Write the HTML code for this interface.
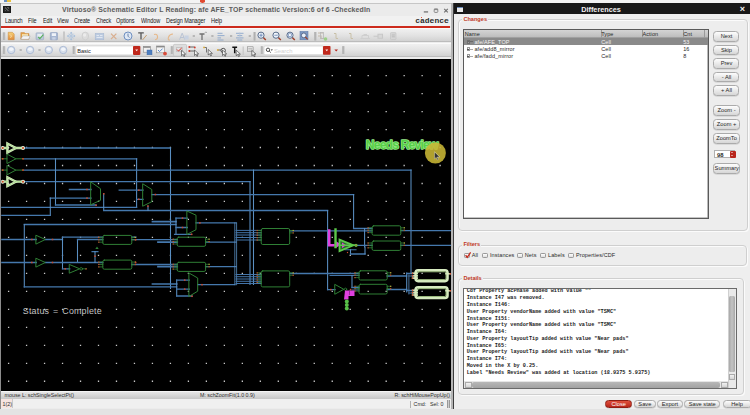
<!DOCTYPE html>
<html><head><meta charset="utf-8">
<style>
*{box-sizing:border-box;margin:0;padding:0}
html,body{width:750px;height:415px;overflow:hidden;background:#e2e2e2;font-family:"Liberation Sans",sans-serif}
.a{position:absolute;white-space:nowrap}
#topstrip{left:0;top:0;width:750px;height:3px;background:#f3f3f3}
#lw{left:0;top:3px;width:452px;height:405.5px;background:#ececec;overflow:hidden}
#lborder{left:0;top:3px;width:1.2px;height:405.5px;background:#8c8c8c}
#title{left:0;top:0;width:452px;height:12.5px;background:#ebebeb;border-top:1px solid #c6c6c6}
#titletext{left:62px;top:1.6px;font-size:6.95px;font-weight:bold;color:#5c5c5c;letter-spacing:0.13px}
#menubar{left:0;top:12.5px;width:452px;height:10.3px;background:#f1f1f1}
.menu{top:1.3px;font-size:6.9px;color:#151515;letter-spacing:-0.1px;transform:scaleX(0.8);transform-origin:0 0}
#redline{left:0;top:22.8px;width:449.5px;height:1.8px;background:#cd2b1d}
.tb{left:0;width:451.5px;background:linear-gradient(#f0f0f0,#e2e2e2 55%,#d2d2d2);border-top:1px solid #fafafa;border-bottom:0.8px solid #bcbcbc}
#canvas{left:1.2px;top:55.6px;width:450.4px;height:332px;background:#000;overflow:hidden}
#sb1{left:1.2px;top:387.5px;width:449.8px;height:8.5px;background:linear-gradient(#e6e6e6,#c6c6c6);font-size:5.3px;color:#2d2d2d;border-top:0.5px solid #f4f4f4}
#sb2{left:1.2px;top:395.6px;width:450px;height:9.4px;background:#f0f0f0;font-size:5.3px;color:#2d2d2d}
#gap1{left:451.4px;top:3px;width:1.4px;height:405.5px;background:#b5b5b5}
#gap2{left:452.8px;top:3px;width:1.4px;height:405.5px;background:#3c3c3c}
#dlg{left:454.2px;top:3px;width:295.8px;height:405.5px;background:#eeeeee;overflow:hidden}
#dtitle{left:-2px;top:0;width:298px;height:11.3px;background:#181818}
.grp{border:1px solid #cfcfcf;border-radius:4px;background:#ededed;box-shadow:inset 1px 1px 0 #fbfbfb,1px 1px 0 #fbfbfb}
.glabel{font-size:5.6px;font-weight:bold;color:#c0391f;background:#eeeeee;padding:0 1px}
.btn{border:1px solid #ababab;border-radius:3.5px;background:linear-gradient(#fdfdfd,#e6e6e6 60%,#d6d6d6);font-size:5.7px;color:#262626;text-align:center;line-height:9.5px;box-shadow:0 0.5px 0 #c8c8c8}
.cb{width:5.6px;height:5.6px;border:0.7px solid #9a9a9a;border-radius:1.2px;background:linear-gradient(#ffffff,#dedede)}
.ft{font-size:5.5px;color:#2a2a2a;letter-spacing:0.1px}
.row{left:0;width:245px;height:7.2px;font-size:5px;color:#222;line-height:7.2px}
#bottomstrip{left:0;top:408.5px;width:750px;height:6.5px;background:#e3e3e3}
#details{left:9px;top:285.3px;width:273.5px;height:100.5px;background:#fff;border:1px solid #6a6a6a;overflow:hidden}
#dtext{left:2.5px;top:-0.9px;font-family:"Liberation Mono",monospace;font-weight:bold;font-size:5.2px;line-height:6.78px;color:#1c1c1c;white-space:pre}
</style></head><body>
<div id="topstrip" class="a">
  <div class="a" style="left:200px;top:-1px;width:4.5px;height:3.5px;border-radius:50%;background:#e04a30"></div>
  <div class="a" style="left:4px;top:0;width:3px;height:2px;background:#6b8fc0"></div>
  <div class="a" style="left:7px;top:0;width:4px;height:2px;background:#e8c040"></div>
</div>
<div id="lw" class="a">
  <div id="title" class="a">
    <div class="a" style="left:3.4px;top:1.8px;width:7.4px;height:7px;background:#2c2c2c;box-shadow:inset 0 0 0 1.2px #1a1a1a"></div>
    <div class="a" style="left:5.1px;top:3.3px;width:4px;height:4px;background:repeating-linear-gradient(45deg,#555 0 1px,#222 1px 2px)"></div>
    <div id="titletext" class="a">Virtuoso® Schematic Editor L Reading: afe AFE_TOP schematic Version:6 of 6 -CheckedIn</div>
    <svg class="a" style="left:0;top:-3px" width="452" height="16" viewBox="0 0 452 16"><path d="M423.8 10.9h4.3" stroke="#8a8a8a" stroke-width="1.6"/><rect x="434.2" y="8" width="3.6" height="3.4" rx="0.8" fill="none" stroke="#8a8a8a" stroke-width="1"/><path d="M434 8.4h4" stroke="#8a8a8a" stroke-width="1.4"/><path d="M444.2 7.8l3.6 3.6M447.8 7.8l-3.6 3.6" stroke="#6e6e6e" stroke-width="1.1"/></svg>
  </div>
  <div id="menubar" class="a">
    <span class="a menu" style="left:5px">Launch</span>
    <span class="a menu" style="left:28px">File</span>
    <span class="a menu" style="left:42.5px">Edit</span>
    <span class="a menu" style="left:56.7px">View</span>
    <span class="a menu" style="left:74px">Create</span>
    <span class="a menu" style="left:96px">Check</span>
    <span class="a menu" style="left:116px">Options</span>
    <span class="a menu" style="left:140.7px">Window</span>
    <span class="a menu" style="left:166px">Design Manager</span>
    <span class="a menu" style="left:210.5px">Help</span>
    <span class="a" style="left:415.2px;top:0.6px;font-family:'Liberation Mono',monospace;font-size:8px;font-weight:bold;color:#2e2e2e;letter-spacing:0px">cadence</span>
    <div class="a" style="left:420.8px;top:1.1px;width:1.6px;height:1.3px;background:#e05a40"></div>
  </div>
  <div id="redline" class="a"></div>
  <div class="a tb" style="top:24.8px;height:14.6px"></div>
  <div class="a tb" style="top:39.6px;height:14.4px"></div><div class="a" style="left:0;top:54px;width:451.5px;height:1.6px;background:#ececec"></div>
    <div id="canvas" class="a"></div>
  <div id="sb1" class="a">
    <span class="a" style="left:3.4px;top:0.5px">mouse L: schSingleSelectPt()</span>
    <span class="a" style="left:198.8px;top:0.5px">M: schZoomFit(1.0 0.9)</span>
    <span class="a" style="left:393.2px;top:0.5px">R: schHiMousePopUp()</span>
  </div>
  <div id="sb2" class="a">
    <div class="a" style="left:0;top:0.5px;width:12.3px;height:9px;background:#f6e4e0;border-right:1px solid #c8c8c8"></div>
    <span class="a" style="left:1.3px;top:2px">1(2)</span>
    <div class="a" style="left:409px;top:2px;width:0.8px;height:7px;background:#b0b0b0"></div>
    <span class="a" style="left:412.4px;top:2px">Cmd:</span>
    <span class="a" style="left:428.8px;top:2px">Sel: 0</span>
    <div class="a" style="left:445.8px;top:1.9px;width:3.5px;height:7.3px;background:repeating-linear-gradient(90deg,#999 0 1px,#ccc 1px 1.7px)"></div>
  </div>
</div>
<svg class="a" style="left:0;top:0" width="452" height="391" viewBox="0 0 452 391"><defs><clipPath id="cc"><rect x="1.2" y="58.6" width="450.4" height="332"/></clipPath></defs><g clip-path="url(#cc)" fill="none" stroke-linecap="square"><path d="M7.95 74.95h1.3v1.3h-1.3zM7.95 92.93h1.3v1.3h-1.3zM7.95 110.91h1.3v1.3h-1.3zM7.95 128.89h1.3v1.3h-1.3zM7.95 146.87h1.3v1.3h-1.3zM7.95 164.85h1.3v1.3h-1.3zM7.95 182.83h1.3v1.3h-1.3zM7.95 200.81h1.3v1.3h-1.3zM7.95 218.79h1.3v1.3h-1.3zM7.95 236.77h1.3v1.3h-1.3zM7.95 254.75h1.3v1.3h-1.3zM7.95 272.73h1.3v1.3h-1.3zM7.95 290.71h1.3v1.3h-1.3zM7.95 308.69h1.3v1.3h-1.3zM7.95 326.67h1.3v1.3h-1.3zM7.95 344.65h1.3v1.3h-1.3zM7.95 362.63h1.3v1.3h-1.3zM7.95 380.61h1.3v1.3h-1.3zM25.93 74.95h1.3v1.3h-1.3zM25.93 92.93h1.3v1.3h-1.3zM25.93 110.91h1.3v1.3h-1.3zM25.93 128.89h1.3v1.3h-1.3zM25.93 146.87h1.3v1.3h-1.3zM25.93 164.85h1.3v1.3h-1.3zM25.93 182.83h1.3v1.3h-1.3zM25.93 200.81h1.3v1.3h-1.3zM25.93 218.79h1.3v1.3h-1.3zM25.93 236.77h1.3v1.3h-1.3zM25.93 254.75h1.3v1.3h-1.3zM25.93 272.73h1.3v1.3h-1.3zM25.93 290.71h1.3v1.3h-1.3zM25.93 308.69h1.3v1.3h-1.3zM25.93 326.67h1.3v1.3h-1.3zM25.93 344.65h1.3v1.3h-1.3zM25.93 362.63h1.3v1.3h-1.3zM25.93 380.61h1.3v1.3h-1.3zM43.91 74.95h1.3v1.3h-1.3zM43.91 92.93h1.3v1.3h-1.3zM43.91 110.91h1.3v1.3h-1.3zM43.91 128.89h1.3v1.3h-1.3zM43.91 146.87h1.3v1.3h-1.3zM43.91 164.85h1.3v1.3h-1.3zM43.91 182.83h1.3v1.3h-1.3zM43.91 200.81h1.3v1.3h-1.3zM43.91 218.79h1.3v1.3h-1.3zM43.91 236.77h1.3v1.3h-1.3zM43.91 254.75h1.3v1.3h-1.3zM43.91 272.73h1.3v1.3h-1.3zM43.91 290.71h1.3v1.3h-1.3zM43.91 308.69h1.3v1.3h-1.3zM43.91 326.67h1.3v1.3h-1.3zM43.91 344.65h1.3v1.3h-1.3zM43.91 362.63h1.3v1.3h-1.3zM43.91 380.61h1.3v1.3h-1.3zM61.89 74.95h1.3v1.3h-1.3zM61.89 92.93h1.3v1.3h-1.3zM61.89 110.91h1.3v1.3h-1.3zM61.89 128.89h1.3v1.3h-1.3zM61.89 146.87h1.3v1.3h-1.3zM61.89 164.85h1.3v1.3h-1.3zM61.89 182.83h1.3v1.3h-1.3zM61.89 200.81h1.3v1.3h-1.3zM61.89 218.79h1.3v1.3h-1.3zM61.89 236.77h1.3v1.3h-1.3zM61.89 254.75h1.3v1.3h-1.3zM61.89 272.73h1.3v1.3h-1.3zM61.89 290.71h1.3v1.3h-1.3zM61.89 308.69h1.3v1.3h-1.3zM61.89 326.67h1.3v1.3h-1.3zM61.89 344.65h1.3v1.3h-1.3zM61.89 362.63h1.3v1.3h-1.3zM61.89 380.61h1.3v1.3h-1.3zM79.87 74.95h1.3v1.3h-1.3zM79.87 92.93h1.3v1.3h-1.3zM79.87 110.91h1.3v1.3h-1.3zM79.87 128.89h1.3v1.3h-1.3zM79.87 146.87h1.3v1.3h-1.3zM79.87 164.85h1.3v1.3h-1.3zM79.87 182.83h1.3v1.3h-1.3zM79.87 200.81h1.3v1.3h-1.3zM79.87 218.79h1.3v1.3h-1.3zM79.87 236.77h1.3v1.3h-1.3zM79.87 254.75h1.3v1.3h-1.3zM79.87 272.73h1.3v1.3h-1.3zM79.87 290.71h1.3v1.3h-1.3zM79.87 308.69h1.3v1.3h-1.3zM79.87 326.67h1.3v1.3h-1.3zM79.87 344.65h1.3v1.3h-1.3zM79.87 362.63h1.3v1.3h-1.3zM79.87 380.61h1.3v1.3h-1.3zM97.85 74.95h1.3v1.3h-1.3zM97.85 92.93h1.3v1.3h-1.3zM97.85 110.91h1.3v1.3h-1.3zM97.85 128.89h1.3v1.3h-1.3zM97.85 146.87h1.3v1.3h-1.3zM97.85 164.85h1.3v1.3h-1.3zM97.85 182.83h1.3v1.3h-1.3zM97.85 200.81h1.3v1.3h-1.3zM97.85 218.79h1.3v1.3h-1.3zM97.85 236.77h1.3v1.3h-1.3zM97.85 254.75h1.3v1.3h-1.3zM97.85 272.73h1.3v1.3h-1.3zM97.85 290.71h1.3v1.3h-1.3zM97.85 308.69h1.3v1.3h-1.3zM97.85 326.67h1.3v1.3h-1.3zM97.85 344.65h1.3v1.3h-1.3zM97.85 362.63h1.3v1.3h-1.3zM97.85 380.61h1.3v1.3h-1.3zM115.83 74.95h1.3v1.3h-1.3zM115.83 92.93h1.3v1.3h-1.3zM115.83 110.91h1.3v1.3h-1.3zM115.83 128.89h1.3v1.3h-1.3zM115.83 146.87h1.3v1.3h-1.3zM115.83 164.85h1.3v1.3h-1.3zM115.83 182.83h1.3v1.3h-1.3zM115.83 200.81h1.3v1.3h-1.3zM115.83 218.79h1.3v1.3h-1.3zM115.83 236.77h1.3v1.3h-1.3zM115.83 254.75h1.3v1.3h-1.3zM115.83 272.73h1.3v1.3h-1.3zM115.83 290.71h1.3v1.3h-1.3zM115.83 308.69h1.3v1.3h-1.3zM115.83 326.67h1.3v1.3h-1.3zM115.83 344.65h1.3v1.3h-1.3zM115.83 362.63h1.3v1.3h-1.3zM115.83 380.61h1.3v1.3h-1.3zM133.81 74.95h1.3v1.3h-1.3zM133.81 92.93h1.3v1.3h-1.3zM133.81 110.91h1.3v1.3h-1.3zM133.81 128.89h1.3v1.3h-1.3zM133.81 146.87h1.3v1.3h-1.3zM133.81 164.85h1.3v1.3h-1.3zM133.81 182.83h1.3v1.3h-1.3zM133.81 200.81h1.3v1.3h-1.3zM133.81 218.79h1.3v1.3h-1.3zM133.81 236.77h1.3v1.3h-1.3zM133.81 254.75h1.3v1.3h-1.3zM133.81 272.73h1.3v1.3h-1.3zM133.81 290.71h1.3v1.3h-1.3zM133.81 308.69h1.3v1.3h-1.3zM133.81 326.67h1.3v1.3h-1.3zM133.81 344.65h1.3v1.3h-1.3zM133.81 362.63h1.3v1.3h-1.3zM133.81 380.61h1.3v1.3h-1.3zM151.79 74.95h1.3v1.3h-1.3zM151.79 92.93h1.3v1.3h-1.3zM151.79 110.91h1.3v1.3h-1.3zM151.79 128.89h1.3v1.3h-1.3zM151.79 146.87h1.3v1.3h-1.3zM151.79 164.85h1.3v1.3h-1.3zM151.79 182.83h1.3v1.3h-1.3zM151.79 200.81h1.3v1.3h-1.3zM151.79 218.79h1.3v1.3h-1.3zM151.79 236.77h1.3v1.3h-1.3zM151.79 254.75h1.3v1.3h-1.3zM151.79 272.73h1.3v1.3h-1.3zM151.79 290.71h1.3v1.3h-1.3zM151.79 308.69h1.3v1.3h-1.3zM151.79 326.67h1.3v1.3h-1.3zM151.79 344.65h1.3v1.3h-1.3zM151.79 362.63h1.3v1.3h-1.3zM151.79 380.61h1.3v1.3h-1.3zM169.77 74.95h1.3v1.3h-1.3zM169.77 92.93h1.3v1.3h-1.3zM169.77 110.91h1.3v1.3h-1.3zM169.77 128.89h1.3v1.3h-1.3zM169.77 146.87h1.3v1.3h-1.3zM169.77 164.85h1.3v1.3h-1.3zM169.77 182.83h1.3v1.3h-1.3zM169.77 200.81h1.3v1.3h-1.3zM169.77 218.79h1.3v1.3h-1.3zM169.77 236.77h1.3v1.3h-1.3zM169.77 254.75h1.3v1.3h-1.3zM169.77 272.73h1.3v1.3h-1.3zM169.77 290.71h1.3v1.3h-1.3zM169.77 308.69h1.3v1.3h-1.3zM169.77 326.67h1.3v1.3h-1.3zM169.77 344.65h1.3v1.3h-1.3zM169.77 362.63h1.3v1.3h-1.3zM169.77 380.61h1.3v1.3h-1.3zM187.75 74.95h1.3v1.3h-1.3zM187.75 92.93h1.3v1.3h-1.3zM187.75 110.91h1.3v1.3h-1.3zM187.75 128.89h1.3v1.3h-1.3zM187.75 146.87h1.3v1.3h-1.3zM187.75 164.85h1.3v1.3h-1.3zM187.75 182.83h1.3v1.3h-1.3zM187.75 200.81h1.3v1.3h-1.3zM187.75 218.79h1.3v1.3h-1.3zM187.75 236.77h1.3v1.3h-1.3zM187.75 254.75h1.3v1.3h-1.3zM187.75 272.73h1.3v1.3h-1.3zM187.75 290.71h1.3v1.3h-1.3zM187.75 308.69h1.3v1.3h-1.3zM187.75 326.67h1.3v1.3h-1.3zM187.75 344.65h1.3v1.3h-1.3zM187.75 362.63h1.3v1.3h-1.3zM187.75 380.61h1.3v1.3h-1.3zM205.73 74.95h1.3v1.3h-1.3zM205.73 92.93h1.3v1.3h-1.3zM205.73 110.91h1.3v1.3h-1.3zM205.73 128.89h1.3v1.3h-1.3zM205.73 146.87h1.3v1.3h-1.3zM205.73 164.85h1.3v1.3h-1.3zM205.73 182.83h1.3v1.3h-1.3zM205.73 200.81h1.3v1.3h-1.3zM205.73 218.79h1.3v1.3h-1.3zM205.73 236.77h1.3v1.3h-1.3zM205.73 254.75h1.3v1.3h-1.3zM205.73 272.73h1.3v1.3h-1.3zM205.73 290.71h1.3v1.3h-1.3zM205.73 308.69h1.3v1.3h-1.3zM205.73 326.67h1.3v1.3h-1.3zM205.73 344.65h1.3v1.3h-1.3zM205.73 362.63h1.3v1.3h-1.3zM205.73 380.61h1.3v1.3h-1.3zM223.71 74.95h1.3v1.3h-1.3zM223.71 92.93h1.3v1.3h-1.3zM223.71 110.91h1.3v1.3h-1.3zM223.71 128.89h1.3v1.3h-1.3zM223.71 146.87h1.3v1.3h-1.3zM223.71 164.85h1.3v1.3h-1.3zM223.71 182.83h1.3v1.3h-1.3zM223.71 200.81h1.3v1.3h-1.3zM223.71 218.79h1.3v1.3h-1.3zM223.71 236.77h1.3v1.3h-1.3zM223.71 254.75h1.3v1.3h-1.3zM223.71 272.73h1.3v1.3h-1.3zM223.71 290.71h1.3v1.3h-1.3zM223.71 308.69h1.3v1.3h-1.3zM223.71 326.67h1.3v1.3h-1.3zM223.71 344.65h1.3v1.3h-1.3zM223.71 362.63h1.3v1.3h-1.3zM223.71 380.61h1.3v1.3h-1.3zM241.69 74.95h1.3v1.3h-1.3zM241.69 92.93h1.3v1.3h-1.3zM241.69 110.91h1.3v1.3h-1.3zM241.69 128.89h1.3v1.3h-1.3zM241.69 146.87h1.3v1.3h-1.3zM241.69 164.85h1.3v1.3h-1.3zM241.69 182.83h1.3v1.3h-1.3zM241.69 200.81h1.3v1.3h-1.3zM241.69 218.79h1.3v1.3h-1.3zM241.69 236.77h1.3v1.3h-1.3zM241.69 254.75h1.3v1.3h-1.3zM241.69 272.73h1.3v1.3h-1.3zM241.69 290.71h1.3v1.3h-1.3zM241.69 308.69h1.3v1.3h-1.3zM241.69 326.67h1.3v1.3h-1.3zM241.69 344.65h1.3v1.3h-1.3zM241.69 362.63h1.3v1.3h-1.3zM241.69 380.61h1.3v1.3h-1.3zM259.67 74.95h1.3v1.3h-1.3zM259.67 92.93h1.3v1.3h-1.3zM259.67 110.91h1.3v1.3h-1.3zM259.67 128.89h1.3v1.3h-1.3zM259.67 146.87h1.3v1.3h-1.3zM259.67 164.85h1.3v1.3h-1.3zM259.67 182.83h1.3v1.3h-1.3zM259.67 200.81h1.3v1.3h-1.3zM259.67 218.79h1.3v1.3h-1.3zM259.67 236.77h1.3v1.3h-1.3zM259.67 254.75h1.3v1.3h-1.3zM259.67 272.73h1.3v1.3h-1.3zM259.67 290.71h1.3v1.3h-1.3zM259.67 308.69h1.3v1.3h-1.3zM259.67 326.67h1.3v1.3h-1.3zM259.67 344.65h1.3v1.3h-1.3zM259.67 362.63h1.3v1.3h-1.3zM259.67 380.61h1.3v1.3h-1.3zM277.65 74.95h1.3v1.3h-1.3zM277.65 92.93h1.3v1.3h-1.3zM277.65 110.91h1.3v1.3h-1.3zM277.65 128.89h1.3v1.3h-1.3zM277.65 146.87h1.3v1.3h-1.3zM277.65 164.85h1.3v1.3h-1.3zM277.65 182.83h1.3v1.3h-1.3zM277.65 200.81h1.3v1.3h-1.3zM277.65 218.79h1.3v1.3h-1.3zM277.65 236.77h1.3v1.3h-1.3zM277.65 254.75h1.3v1.3h-1.3zM277.65 272.73h1.3v1.3h-1.3zM277.65 290.71h1.3v1.3h-1.3zM277.65 308.69h1.3v1.3h-1.3zM277.65 326.67h1.3v1.3h-1.3zM277.65 344.65h1.3v1.3h-1.3zM277.65 362.63h1.3v1.3h-1.3zM277.65 380.61h1.3v1.3h-1.3zM295.63 74.95h1.3v1.3h-1.3zM295.63 92.93h1.3v1.3h-1.3zM295.63 110.91h1.3v1.3h-1.3zM295.63 128.89h1.3v1.3h-1.3zM295.63 146.87h1.3v1.3h-1.3zM295.63 164.85h1.3v1.3h-1.3zM295.63 182.83h1.3v1.3h-1.3zM295.63 200.81h1.3v1.3h-1.3zM295.63 218.79h1.3v1.3h-1.3zM295.63 236.77h1.3v1.3h-1.3zM295.63 254.75h1.3v1.3h-1.3zM295.63 272.73h1.3v1.3h-1.3zM295.63 290.71h1.3v1.3h-1.3zM295.63 308.69h1.3v1.3h-1.3zM295.63 326.67h1.3v1.3h-1.3zM295.63 344.65h1.3v1.3h-1.3zM295.63 362.63h1.3v1.3h-1.3zM295.63 380.61h1.3v1.3h-1.3zM313.61 74.95h1.3v1.3h-1.3zM313.61 92.93h1.3v1.3h-1.3zM313.61 110.91h1.3v1.3h-1.3zM313.61 128.89h1.3v1.3h-1.3zM313.61 146.87h1.3v1.3h-1.3zM313.61 164.85h1.3v1.3h-1.3zM313.61 182.83h1.3v1.3h-1.3zM313.61 200.81h1.3v1.3h-1.3zM313.61 218.79h1.3v1.3h-1.3zM313.61 236.77h1.3v1.3h-1.3zM313.61 254.75h1.3v1.3h-1.3zM313.61 272.73h1.3v1.3h-1.3zM313.61 290.71h1.3v1.3h-1.3zM313.61 308.69h1.3v1.3h-1.3zM313.61 326.67h1.3v1.3h-1.3zM313.61 344.65h1.3v1.3h-1.3zM313.61 362.63h1.3v1.3h-1.3zM313.61 380.61h1.3v1.3h-1.3zM331.59 74.95h1.3v1.3h-1.3zM331.59 92.93h1.3v1.3h-1.3zM331.59 110.91h1.3v1.3h-1.3zM331.59 128.89h1.3v1.3h-1.3zM331.59 146.87h1.3v1.3h-1.3zM331.59 164.85h1.3v1.3h-1.3zM331.59 182.83h1.3v1.3h-1.3zM331.59 200.81h1.3v1.3h-1.3zM331.59 218.79h1.3v1.3h-1.3zM331.59 236.77h1.3v1.3h-1.3zM331.59 254.75h1.3v1.3h-1.3zM331.59 272.73h1.3v1.3h-1.3zM331.59 290.71h1.3v1.3h-1.3zM331.59 308.69h1.3v1.3h-1.3zM331.59 326.67h1.3v1.3h-1.3zM331.59 344.65h1.3v1.3h-1.3zM331.59 362.63h1.3v1.3h-1.3zM331.59 380.61h1.3v1.3h-1.3zM349.57 74.95h1.3v1.3h-1.3zM349.57 92.93h1.3v1.3h-1.3zM349.57 110.91h1.3v1.3h-1.3zM349.57 128.89h1.3v1.3h-1.3zM349.57 146.87h1.3v1.3h-1.3zM349.57 164.85h1.3v1.3h-1.3zM349.57 182.83h1.3v1.3h-1.3zM349.57 200.81h1.3v1.3h-1.3zM349.57 218.79h1.3v1.3h-1.3zM349.57 236.77h1.3v1.3h-1.3zM349.57 254.75h1.3v1.3h-1.3zM349.57 272.73h1.3v1.3h-1.3zM349.57 290.71h1.3v1.3h-1.3zM349.57 308.69h1.3v1.3h-1.3zM349.57 326.67h1.3v1.3h-1.3zM349.57 344.65h1.3v1.3h-1.3zM349.57 362.63h1.3v1.3h-1.3zM349.57 380.61h1.3v1.3h-1.3zM367.55 74.95h1.3v1.3h-1.3zM367.55 92.93h1.3v1.3h-1.3zM367.55 110.91h1.3v1.3h-1.3zM367.55 128.89h1.3v1.3h-1.3zM367.55 146.87h1.3v1.3h-1.3zM367.55 164.85h1.3v1.3h-1.3zM367.55 182.83h1.3v1.3h-1.3zM367.55 200.81h1.3v1.3h-1.3zM367.55 218.79h1.3v1.3h-1.3zM367.55 236.77h1.3v1.3h-1.3zM367.55 254.75h1.3v1.3h-1.3zM367.55 272.73h1.3v1.3h-1.3zM367.55 290.71h1.3v1.3h-1.3zM367.55 308.69h1.3v1.3h-1.3zM367.55 326.67h1.3v1.3h-1.3zM367.55 344.65h1.3v1.3h-1.3zM367.55 362.63h1.3v1.3h-1.3zM367.55 380.61h1.3v1.3h-1.3zM385.53 74.95h1.3v1.3h-1.3zM385.53 92.93h1.3v1.3h-1.3zM385.53 110.91h1.3v1.3h-1.3zM385.53 128.89h1.3v1.3h-1.3zM385.53 146.87h1.3v1.3h-1.3zM385.53 164.85h1.3v1.3h-1.3zM385.53 182.83h1.3v1.3h-1.3zM385.53 200.81h1.3v1.3h-1.3zM385.53 218.79h1.3v1.3h-1.3zM385.53 236.77h1.3v1.3h-1.3zM385.53 254.75h1.3v1.3h-1.3zM385.53 272.73h1.3v1.3h-1.3zM385.53 290.71h1.3v1.3h-1.3zM385.53 308.69h1.3v1.3h-1.3zM385.53 326.67h1.3v1.3h-1.3zM385.53 344.65h1.3v1.3h-1.3zM385.53 362.63h1.3v1.3h-1.3zM385.53 380.61h1.3v1.3h-1.3zM403.51 74.95h1.3v1.3h-1.3zM403.51 92.93h1.3v1.3h-1.3zM403.51 110.91h1.3v1.3h-1.3zM403.51 128.89h1.3v1.3h-1.3zM403.51 146.87h1.3v1.3h-1.3zM403.51 164.85h1.3v1.3h-1.3zM403.51 182.83h1.3v1.3h-1.3zM403.51 200.81h1.3v1.3h-1.3zM403.51 218.79h1.3v1.3h-1.3zM403.51 236.77h1.3v1.3h-1.3zM403.51 254.75h1.3v1.3h-1.3zM403.51 272.73h1.3v1.3h-1.3zM403.51 290.71h1.3v1.3h-1.3zM403.51 308.69h1.3v1.3h-1.3zM403.51 326.67h1.3v1.3h-1.3zM403.51 344.65h1.3v1.3h-1.3zM403.51 362.63h1.3v1.3h-1.3zM403.51 380.61h1.3v1.3h-1.3zM421.49 74.95h1.3v1.3h-1.3zM421.49 92.93h1.3v1.3h-1.3zM421.49 110.91h1.3v1.3h-1.3zM421.49 128.89h1.3v1.3h-1.3zM421.49 146.87h1.3v1.3h-1.3zM421.49 164.85h1.3v1.3h-1.3zM421.49 182.83h1.3v1.3h-1.3zM421.49 200.81h1.3v1.3h-1.3zM421.49 218.79h1.3v1.3h-1.3zM421.49 236.77h1.3v1.3h-1.3zM421.49 254.75h1.3v1.3h-1.3zM421.49 272.73h1.3v1.3h-1.3zM421.49 290.71h1.3v1.3h-1.3zM421.49 308.69h1.3v1.3h-1.3zM421.49 326.67h1.3v1.3h-1.3zM421.49 344.65h1.3v1.3h-1.3zM421.49 362.63h1.3v1.3h-1.3zM421.49 380.61h1.3v1.3h-1.3zM439.47 74.95h1.3v1.3h-1.3zM439.47 92.93h1.3v1.3h-1.3zM439.47 110.91h1.3v1.3h-1.3zM439.47 128.89h1.3v1.3h-1.3zM439.47 146.87h1.3v1.3h-1.3zM439.47 164.85h1.3v1.3h-1.3zM439.47 182.83h1.3v1.3h-1.3zM439.47 200.81h1.3v1.3h-1.3zM439.47 218.79h1.3v1.3h-1.3zM439.47 236.77h1.3v1.3h-1.3zM439.47 254.75h1.3v1.3h-1.3zM439.47 272.73h1.3v1.3h-1.3zM439.47 290.71h1.3v1.3h-1.3zM439.47 308.69h1.3v1.3h-1.3zM439.47 326.67h1.3v1.3h-1.3zM439.47 344.65h1.3v1.3h-1.3zM439.47 362.63h1.3v1.3h-1.3zM439.47 380.61h1.3v1.3h-1.3z" fill="#c8c8c8"/><path d="M24 148H170.5" stroke="#4578ad" stroke-width="1.296"/><path d="M170.5 148V288.4" stroke="#5a8fc2" stroke-width="1.056"/><path d="M24 158.8H136.6" stroke="#4578ad" stroke-width="1.296"/><path d="M136.6 158.8V207.3" stroke="#5a8fc2" stroke-width="1.056"/><path d="M1 207.3H136.6" stroke="#4578ad" stroke-width="1.296"/><path d="M24 170.1H411" stroke="#4578ad" stroke-width="1.296"/><path d="M411 170.1V272.5" stroke="#5a8fc2" stroke-width="1.056"/><path d="M253.5 170.1V284.4" stroke="#5a8fc2" stroke-width="1.056"/><path d="M24 181.7H250" stroke="#4578ad" stroke-width="1.296"/><path d="M250 181.7V284.4" stroke="#5a8fc2" stroke-width="1.056"/><path d="M55.5 158.8V205" stroke="#5a8fc2" stroke-width="1.056"/><path d="M55.5 205H96" stroke="#4578ad" stroke-width="1.296"/><path d="M50.3 198.1H91" stroke="#4578ad" stroke-width="1.296"/><path d="M50.3 198.1V215.4" stroke="#5a8fc2" stroke-width="1.056"/><path d="M1 215.4H50.3" stroke="#4578ad" stroke-width="1.296"/><path d="M69.4 189.5H91" stroke="#4578ad" stroke-width="1.296"/><path d="M103.7 193.8V210.5" stroke="#5a8fc2" stroke-width="1.056"/><path d="M103.7 210.5H327.6" stroke="#4578ad" stroke-width="1.296"/><path d="M327.6 210.5V289.6" stroke="#5a8fc2" stroke-width="1.056"/><path d="M327.6 289.6H335" stroke="#4578ad" stroke-width="1.296"/><path d="M119.2 190.2H143" stroke="#4578ad" stroke-width="1.296"/><path d="M136.6 199.3H143" stroke="#4578ad" stroke-width="1.296"/><path d="M151.8 194.6H353.6" stroke="#4578ad" stroke-width="1.296"/><path d="M353.6 194.6V228.5" stroke="#5a8fc2" stroke-width="1.056"/><path d="M353.6 228.5H372" stroke="#4578ad" stroke-width="1.296"/><path d="M148 206V210.5" stroke="#5a8fc2" stroke-width="1.056"/><path d="M24.3 224.5H176" stroke="#4578ad" stroke-width="1.296"/><path d="M24.3 224.5V286.9" stroke="#5a8fc2" stroke-width="1.056"/><path d="M24.3 286.9H176.7" stroke="#4578ad" stroke-width="1.296"/><path d="M1 239.5H36.3" stroke="#4578ad" stroke-width="1.296"/><path d="M45.3 239.5H62.5" stroke="#4578ad" stroke-width="1.296"/><path d="M62.5 237.2V268.8" stroke="#5a8fc2" stroke-width="1.056"/><path d="M62.5 237.2H102.8" stroke="#4578ad" stroke-width="1.296"/><path d="M77.5 239.5V262.5" stroke="#5a8fc2" stroke-width="1.056"/><path d="M77.5 239.5H102.8" stroke="#4578ad" stroke-width="1.296"/><path d="M1 262.5H36.3" stroke="#4578ad" stroke-width="1.296"/><path d="M45.3 262.5H102.8" stroke="#4578ad" stroke-width="1.296"/><path d="M62.5 268.8H69.7" stroke="#4578ad" stroke-width="1.296"/><path d="M92 251.6H98" stroke="#4578ad" stroke-width="1.08"/><path d="M95 251.6V262.5" stroke="#5a8fc2" stroke-width="1.056"/><path d="M131.8 239.7H177.2" stroke="#4578ad" stroke-width="1.296"/><path d="M131.8 237.2H136" stroke="#4578ad" stroke-width="1.296"/><path d="M131.8 264.5H177.2" stroke="#4578ad" stroke-width="1.296"/><path d="M152.5 221.6H176" stroke="#4578ad" stroke-width="1.7280000000000002"/><path d="M176 218.1V234.3" stroke="#5a8fc2" stroke-width="1.056"/><path d="M176 218.1H187.3" stroke="#4578ad" stroke-width="1.296"/><path d="M176 227.5H187.3" stroke="#4578ad" stroke-width="1.296"/><path d="M174.6 234.3H191.6" stroke="#4578ad" stroke-width="1.296"/><path d="M158 242.2H177.2" stroke="#4578ad" stroke-width="1.7280000000000002"/><path d="M158 266.7H177.2" stroke="#4578ad" stroke-width="1.7280000000000002"/><path d="M152.5 284H176.7" stroke="#4578ad" stroke-width="1.7280000000000002"/><path d="M176.7 280.1V296" stroke="#5a8fc2" stroke-width="1.056"/><path d="M176.7 280.1H189.3" stroke="#4578ad" stroke-width="1.296"/><path d="M176.7 289.1H189.3" stroke="#4578ad" stroke-width="1.296"/><path d="M176.7 296H192" stroke="#4578ad" stroke-width="1.296"/><path d="M196 222.9H236" stroke="#4578ad" stroke-width="1.296"/><path d="M205.6 242.2H236" stroke="#4578ad" stroke-width="1.296"/><path d="M205.6 266.7H236" stroke="#4578ad" stroke-width="1.296"/><path d="M197.7 284.7H235" stroke="#4578ad" stroke-width="1.296"/><path d="M234.8 222.9V284.7" stroke="#5a8fc2" stroke-width="0.792"/><path d="M236.6 222.9V284.7" stroke="#5a8fc2" stroke-width="0.792"/><path d="M236 230.4H261.2" stroke="#4578ad" stroke-width="0.9720000000000001"/><path d="M236 232.7H261.2" stroke="#4578ad" stroke-width="0.9720000000000001"/><path d="M236 235H261.2" stroke="#4578ad" stroke-width="0.9720000000000001"/><path d="M236 237.5H261.2" stroke="#4578ad" stroke-width="0.9720000000000001"/><path d="M236 240H261.2" stroke="#4578ad" stroke-width="0.9720000000000001"/><path d="M236 274.5H261.2" stroke="#4578ad" stroke-width="0.9720000000000001"/><path d="M236 276.7H261.2" stroke="#4578ad" stroke-width="0.9720000000000001"/><path d="M236 279H261.2" stroke="#4578ad" stroke-width="0.9720000000000001"/><path d="M236 281.3H261.2" stroke="#4578ad" stroke-width="0.9720000000000001"/><path d="M236 283.5H261.2" stroke="#4578ad" stroke-width="0.9720000000000001"/><path d="M289.7 230.8H372" stroke="#4578ad" stroke-width="1.296"/><path d="M289.7 273.5H359" stroke="#4578ad" stroke-width="1.296"/><path d="M330 275.5H359" stroke="#4578ad" stroke-width="0.9720000000000001"/><path d="M352 275.5V287.5" stroke="#5a8fc2" stroke-width="1.056"/><path d="M352 287.5H359" stroke="#4578ad" stroke-width="1.296"/><path d="M352 290H359" stroke="#4578ad" stroke-width="0.9720000000000001"/><path d="M364.6 228.5V247" stroke="#5a8fc2" stroke-width="1.056"/><path d="M353.4 245.3H372" stroke="#4578ad" stroke-width="1.296"/><path d="M400.8 230.6H451.5" stroke="#4578ad" stroke-width="1.296"/><path d="M400.8 245.4H451.5" stroke="#4578ad" stroke-width="1.296"/><path d="M387.2 276H406.7" stroke="#4578ad" stroke-width="1.296"/><path d="M387.2 289.5H406.7" stroke="#4578ad" stroke-width="1.296"/><path d="M406.7 273V292" stroke="#5a8fc2" stroke-width="1.056"/><path d="M408.9 275V294" stroke="#5a8fc2" stroke-width="0.792"/><path d="M406.7 273.5H417" stroke="#4578ad" stroke-width="1.296"/><path d="M408.9 276H417" stroke="#4578ad" stroke-width="0.9720000000000001"/><path d="M406.7 290.5H417" stroke="#4578ad" stroke-width="1.296"/><path d="M408.9 293H417" stroke="#4578ad" stroke-width="0.9720000000000001"/><path d="M345 249.7H356" stroke="#4578ad" stroke-width="1.08"/><path d="M350.5 249.7V254" stroke="#5a8fc2" stroke-width="1.056"/><path d="M350.5 254H365" stroke="#4578ad" stroke-width="1.296"/><path d="M365 247V254" stroke="#5a8fc2" stroke-width="1.056"/><path d="M7.4 143.5 L15.9 148 L7.4 152.5Z" stroke="#d6edbf" stroke-width="2.3" fill="none"/><path d="M2.7 148H7.4" stroke="#d6edbf" stroke-width="2.3"/><path d="M15.9 148H23" stroke="#d6edbf" stroke-width="2.3"/><circle cx="2.7" cy="148" r="2" fill="#e8f3dc"/><circle cx="23" cy="148" r="2" fill="#e8f3dc"/><path d="M7.4 143.5 L15.9 148 L7.4 152.5Z" stroke="#a6d88a" stroke-width="0.8" fill="none"/><path d="M15.9 148H23" stroke="#a6d88a" stroke-width="0.9"/><path d="M2.7 148H7.4" stroke="#a6d88a" stroke-width="0.9"/><rect x="1.80" y="147.10" width="1.8" height="1.8" fill="#d04a2a"/><rect x="22.10" y="147.10" width="1.8" height="1.8" fill="#d04a2a"/><path d="M1 158.8H7.4" stroke="#2f7f35" stroke-width="1.0"/><path d="M15.9 158.8H23" stroke="#2f7f35" stroke-width="1.0"/><path d="M7.4 154.3 L15.9 158.8 L7.4 163.3Z" stroke="#2f7f35" stroke-width="1.0" fill="#000"/><rect x="1.90" y="158.00" width="1.6" height="1.6" fill="#d04a2a"/><rect x="22.20" y="158.00" width="1.6" height="1.6" fill="#d04a2a"/><path d="M1 170.1H7.4" stroke="#2f7f35" stroke-width="1.0"/><path d="M15.9 170.1H23" stroke="#2f7f35" stroke-width="1.0"/><path d="M7.4 165.6 L15.9 170.1 L7.4 174.6Z" stroke="#2f7f35" stroke-width="1.0" fill="#000"/><rect x="1.90" y="169.30" width="1.6" height="1.6" fill="#d04a2a"/><rect x="22.20" y="169.30" width="1.6" height="1.6" fill="#d04a2a"/><path d="M7.4 177.2 L15.9 181.7 L7.4 186.2Z" stroke="#d6edbf" stroke-width="2.3" fill="none"/><path d="M2.7 181.7H7.4" stroke="#d6edbf" stroke-width="2.3"/><path d="M15.9 181.7H23" stroke="#d6edbf" stroke-width="2.3"/><circle cx="2.7" cy="181.7" r="2" fill="#e8f3dc"/><circle cx="23" cy="181.7" r="2" fill="#e8f3dc"/><path d="M7.4 177.2 L15.9 181.7 L7.4 186.2Z" stroke="#a6d88a" stroke-width="0.8" fill="none"/><path d="M15.9 181.7H23" stroke="#a6d88a" stroke-width="0.9"/><path d="M2.7 181.7H7.4" stroke="#a6d88a" stroke-width="0.9"/><rect x="1.80" y="180.80" width="1.8" height="1.8" fill="#d04a2a"/><rect x="22.10" y="180.80" width="1.8" height="1.8" fill="#d04a2a"/><path d="M91.1 182.2 L100.5 188.7 L100.5 200.3 L91.1 204.6Z" stroke="#2f7f35" stroke-width="1.0" fill="none"/><path d="M143.1 184 L151.8 189.5 L151.8 201.7 L143.1 206Z" stroke="#2f7f35" stroke-width="1.0" fill="none"/><path d="M187.3 211.2 L196 215.2 L196 229.7 L187.3 234.3Z" stroke="#2f7f35" stroke-width="1.0" fill="none"/><path d="M189.3 273.2 L197.7 278 L197.7 291.2 L189.3 296.3Z" stroke="#2f7f35" stroke-width="1.0" fill="none"/><rect x="86.25" y="188.75" width="1.5" height="1.5" fill="#d04a2a"/><rect x="86.25" y="197.35" width="1.5" height="1.5" fill="#d04a2a"/><rect x="95.35" y="204.55" width="1.5" height="1.5" fill="#d04a2a"/><rect x="103.05" y="193.05" width="1.5" height="1.5" fill="#d04a2a"/><rect x="138.05" y="189.45" width="1.5" height="1.5" fill="#d04a2a"/><rect x="138.05" y="198.55" width="1.5" height="1.5" fill="#d04a2a"/><rect x="154.65" y="193.75" width="1.5" height="1.5" fill="#d04a2a"/><rect x="147.15" y="205.35" width="1.5" height="1.5" fill="#d04a2a"/><rect x="181.75" y="217.35" width="1.5" height="1.5" fill="#d04a2a"/><rect x="181.75" y="226.75" width="1.5" height="1.5" fill="#d04a2a"/><rect x="199.15" y="222.15" width="1.5" height="1.5" fill="#d04a2a"/><rect x="190.85" y="233.55" width="1.5" height="1.5" fill="#d04a2a"/><rect x="183.95" y="279.35" width="1.5" height="1.5" fill="#d04a2a"/><rect x="183.95" y="288.35" width="1.5" height="1.5" fill="#d04a2a"/><rect x="201.25" y="283.95" width="1.5" height="1.5" fill="#d04a2a"/><rect x="191.25" y="295.55" width="1.5" height="1.5" fill="#d04a2a"/><rect x="102.8" y="235.4" width="29.00" height="9.00" rx="1.5" stroke="#2f7f35" stroke-width="1.0" fill="none"/><path d="M98.8 237.4H102.8" stroke="#2f7f35" stroke-width="0.8"/><rect x="98.20" y="236.80" width="1.2" height="1.2" fill="#d04a2a"/><path d="M98.8 239.8H102.8" stroke="#2f7f35" stroke-width="0.8"/><rect x="98.20" y="239.20" width="1.2" height="1.2" fill="#d04a2a"/><path d="M98.8 242.20000000000002H102.8" stroke="#2f7f35" stroke-width="0.8"/><rect x="98.20" y="241.60" width="1.2" height="1.2" fill="#d04a2a"/><path d="M131.8 237.4H135.3" stroke="#2f7f35" stroke-width="0.8"/><rect x="134.70" y="236.80" width="1.2" height="1.2" fill="#c8b040"/><path d="M131.8 239.8H135.3" stroke="#2f7f35" stroke-width="0.8"/><rect x="134.70" y="239.20" width="1.2" height="1.2" fill="#d04a2a"/><rect x="102.8" y="260.1" width="29.00" height="9.10" rx="1.5" stroke="#2f7f35" stroke-width="1.0" fill="none"/><path d="M98.8 262.1H102.8" stroke="#2f7f35" stroke-width="0.8"/><rect x="98.20" y="261.50" width="1.2" height="1.2" fill="#d04a2a"/><path d="M98.8 264.5H102.8" stroke="#2f7f35" stroke-width="0.8"/><rect x="98.20" y="263.90" width="1.2" height="1.2" fill="#d04a2a"/><path d="M98.8 266.90000000000003H102.8" stroke="#2f7f35" stroke-width="0.8"/><rect x="98.20" y="266.30" width="1.2" height="1.2" fill="#d04a2a"/><path d="M131.8 262.1H135.3" stroke="#2f7f35" stroke-width="0.8"/><rect x="134.70" y="261.50" width="1.2" height="1.2" fill="#c8b040"/><path d="M131.8 264.5H135.3" stroke="#2f7f35" stroke-width="0.8"/><rect x="134.70" y="263.90" width="1.2" height="1.2" fill="#d04a2a"/><rect x="177.2" y="237.2" width="28.40" height="9.10" rx="1.5" stroke="#2f7f35" stroke-width="1.0" fill="none"/><path d="M173.2 239.2H177.2" stroke="#2f7f35" stroke-width="0.8"/><rect x="172.60" y="238.60" width="1.2" height="1.2" fill="#d04a2a"/><path d="M173.2 241.6H177.2" stroke="#2f7f35" stroke-width="0.8"/><rect x="172.60" y="241.00" width="1.2" height="1.2" fill="#d04a2a"/><path d="M173.2 244.0H177.2" stroke="#2f7f35" stroke-width="0.8"/><rect x="172.60" y="243.40" width="1.2" height="1.2" fill="#d04a2a"/><path d="M205.6 239.2H209.1" stroke="#2f7f35" stroke-width="0.8"/><rect x="208.50" y="238.60" width="1.2" height="1.2" fill="#c8b040"/><path d="M205.6 241.6H209.1" stroke="#2f7f35" stroke-width="0.8"/><rect x="208.50" y="241.00" width="1.2" height="1.2" fill="#d04a2a"/><rect x="177.2" y="262.3" width="28.40" height="9.10" rx="1.5" stroke="#2f7f35" stroke-width="1.0" fill="none"/><path d="M173.2 264.3H177.2" stroke="#2f7f35" stroke-width="0.8"/><rect x="172.60" y="263.70" width="1.2" height="1.2" fill="#d04a2a"/><path d="M173.2 266.7H177.2" stroke="#2f7f35" stroke-width="0.8"/><rect x="172.60" y="266.10" width="1.2" height="1.2" fill="#d04a2a"/><path d="M173.2 269.1H177.2" stroke="#2f7f35" stroke-width="0.8"/><rect x="172.60" y="268.50" width="1.2" height="1.2" fill="#d04a2a"/><path d="M205.6 264.3H209.1" stroke="#2f7f35" stroke-width="0.8"/><rect x="208.50" y="263.70" width="1.2" height="1.2" fill="#c8b040"/><path d="M205.6 266.7H209.1" stroke="#2f7f35" stroke-width="0.8"/><rect x="208.50" y="266.10" width="1.2" height="1.2" fill="#d04a2a"/><rect x="261.2" y="228.5" width="28.50" height="16.00" rx="1.5" stroke="#2f7f35" stroke-width="1.0" fill="none"/><path d="M257.2 230.5H261.2" stroke="#2f7f35" stroke-width="0.8"/><rect x="256.60" y="229.90" width="1.2" height="1.2" fill="#d04a2a"/><path d="M257.2 232.9H261.2" stroke="#2f7f35" stroke-width="0.8"/><rect x="256.60" y="232.30" width="1.2" height="1.2" fill="#d04a2a"/><path d="M257.2 235.3H261.2" stroke="#2f7f35" stroke-width="0.8"/><rect x="256.60" y="234.70" width="1.2" height="1.2" fill="#d04a2a"/><path d="M257.2 237.7H261.2" stroke="#2f7f35" stroke-width="0.8"/><rect x="256.60" y="237.10" width="1.2" height="1.2" fill="#d04a2a"/><path d="M257.2 240.1H261.2" stroke="#2f7f35" stroke-width="0.8"/><rect x="256.60" y="239.50" width="1.2" height="1.2" fill="#d04a2a"/><path d="M289.7 230.5H293.2" stroke="#2f7f35" stroke-width="0.8"/><rect x="292.60" y="229.90" width="1.2" height="1.2" fill="#c8b040"/><path d="M289.7 232.9H293.2" stroke="#2f7f35" stroke-width="0.8"/><rect x="292.60" y="232.30" width="1.2" height="1.2" fill="#d04a2a"/><rect x="261.2" y="270.9" width="28.50" height="16.00" rx="1.5" stroke="#2f7f35" stroke-width="1.0" fill="none"/><path d="M257.2 272.9H261.2" stroke="#2f7f35" stroke-width="0.8"/><rect x="256.60" y="272.30" width="1.2" height="1.2" fill="#d04a2a"/><path d="M257.2 275.29999999999995H261.2" stroke="#2f7f35" stroke-width="0.8"/><rect x="256.60" y="274.70" width="1.2" height="1.2" fill="#d04a2a"/><path d="M257.2 277.7H261.2" stroke="#2f7f35" stroke-width="0.8"/><rect x="256.60" y="277.10" width="1.2" height="1.2" fill="#d04a2a"/><path d="M257.2 280.09999999999997H261.2" stroke="#2f7f35" stroke-width="0.8"/><rect x="256.60" y="279.50" width="1.2" height="1.2" fill="#d04a2a"/><path d="M257.2 282.5H261.2" stroke="#2f7f35" stroke-width="0.8"/><rect x="256.60" y="281.90" width="1.2" height="1.2" fill="#d04a2a"/><path d="M289.7 272.9H293.2" stroke="#2f7f35" stroke-width="0.8"/><rect x="292.60" y="272.30" width="1.2" height="1.2" fill="#c8b040"/><path d="M289.7 275.29999999999995H293.2" stroke="#2f7f35" stroke-width="0.8"/><rect x="292.60" y="274.70" width="1.2" height="1.2" fill="#d04a2a"/><rect x="372.1" y="225.8" width="28.70" height="9.40" rx="1.5" stroke="#2f7f35" stroke-width="1.0" fill="none"/><path d="M368.1 227.8H372.1" stroke="#2f7f35" stroke-width="0.8"/><rect x="367.50" y="227.20" width="1.2" height="1.2" fill="#d04a2a"/><path d="M368.1 230.20000000000002H372.1" stroke="#2f7f35" stroke-width="0.8"/><rect x="367.50" y="229.60" width="1.2" height="1.2" fill="#d04a2a"/><path d="M368.1 232.60000000000002H372.1" stroke="#2f7f35" stroke-width="0.8"/><rect x="367.50" y="232.00" width="1.2" height="1.2" fill="#d04a2a"/><path d="M400.8 227.8H404.3" stroke="#2f7f35" stroke-width="0.8"/><rect x="403.70" y="227.20" width="1.2" height="1.2" fill="#c8b040"/><path d="M400.8 230.20000000000002H404.3" stroke="#2f7f35" stroke-width="0.8"/><rect x="403.70" y="229.60" width="1.2" height="1.2" fill="#d04a2a"/><rect x="372.1" y="241" width="28.70" height="9.40" rx="1.5" stroke="#2f7f35" stroke-width="1.0" fill="none"/><path d="M368.1 243.0H372.1" stroke="#2f7f35" stroke-width="0.8"/><rect x="367.50" y="242.40" width="1.2" height="1.2" fill="#d04a2a"/><path d="M368.1 245.4H372.1" stroke="#2f7f35" stroke-width="0.8"/><rect x="367.50" y="244.80" width="1.2" height="1.2" fill="#d04a2a"/><path d="M368.1 247.8H372.1" stroke="#2f7f35" stroke-width="0.8"/><rect x="367.50" y="247.20" width="1.2" height="1.2" fill="#d04a2a"/><path d="M400.8 243.0H404.3" stroke="#2f7f35" stroke-width="0.8"/><rect x="403.70" y="242.40" width="1.2" height="1.2" fill="#c8b040"/><path d="M400.8 245.4H404.3" stroke="#2f7f35" stroke-width="0.8"/><rect x="403.70" y="244.80" width="1.2" height="1.2" fill="#d04a2a"/><rect x="359" y="270.8" width="28.20" height="9.20" rx="1.5" stroke="#2f7f35" stroke-width="1.0" fill="none"/><path d="M355 272.8H359" stroke="#2f7f35" stroke-width="0.8"/><rect x="354.40" y="272.20" width="1.2" height="1.2" fill="#d04a2a"/><path d="M355 275.2H359" stroke="#2f7f35" stroke-width="0.8"/><rect x="354.40" y="274.60" width="1.2" height="1.2" fill="#d04a2a"/><path d="M355 277.6H359" stroke="#2f7f35" stroke-width="0.8"/><rect x="354.40" y="277.00" width="1.2" height="1.2" fill="#d04a2a"/><path d="M387.2 272.8H390.7" stroke="#2f7f35" stroke-width="0.8"/><rect x="390.10" y="272.20" width="1.2" height="1.2" fill="#c8b040"/><path d="M387.2 275.2H390.7" stroke="#2f7f35" stroke-width="0.8"/><rect x="390.10" y="274.60" width="1.2" height="1.2" fill="#d04a2a"/><rect x="359" y="284.3" width="28.20" height="9.70" rx="1.5" stroke="#2f7f35" stroke-width="1.0" fill="none"/><path d="M355 286.3H359" stroke="#2f7f35" stroke-width="0.8"/><rect x="354.40" y="285.70" width="1.2" height="1.2" fill="#d04a2a"/><path d="M355 288.7H359" stroke="#2f7f35" stroke-width="0.8"/><rect x="354.40" y="288.10" width="1.2" height="1.2" fill="#d04a2a"/><path d="M355 291.1H359" stroke="#2f7f35" stroke-width="0.8"/><rect x="354.40" y="290.50" width="1.2" height="1.2" fill="#d04a2a"/><path d="M387.2 286.3H390.7" stroke="#2f7f35" stroke-width="0.8"/><rect x="390.10" y="285.70" width="1.2" height="1.2" fill="#c8b040"/><path d="M387.2 288.7H390.7" stroke="#2f7f35" stroke-width="0.8"/><rect x="390.10" y="288.10" width="1.2" height="1.2" fill="#d04a2a"/><rect x="415.6" y="270.3" width="31.899999999999977" height="10.800000000000011" rx="2.5" stroke="#d6eabf" stroke-width="2.6" fill="none"/><rect x="417.1" y="271.8" width="28.90" height="7.80" rx="1.5" stroke="#b2d890" stroke-width="0.8" fill="none"/><path d="M412.6 273.3H417.1" stroke="#d6eabf" stroke-width="1.6"/><rect x="411.95" y="272.65" width="1.3" height="1.3" fill="#d04a2a"/><path d="M412.6 275.7H417.1" stroke="#d6eabf" stroke-width="1.6"/><rect x="411.95" y="275.05" width="1.3" height="1.3" fill="#d04a2a"/><path d="M412.6 278.1H417.1" stroke="#d6eabf" stroke-width="1.6"/><rect x="411.95" y="277.45" width="1.3" height="1.3" fill="#d04a2a"/><path d="M446 273.8H450" stroke="#d6eabf" stroke-width="1.6"/><rect x="449.60" y="273.10" width="1.4" height="1.4" fill="#d04a2a"/><rect x="415.6" y="287.2" width="31.899999999999977" height="10.800000000000011" rx="2.5" stroke="#d6eabf" stroke-width="2.6" fill="none"/><rect x="417.1" y="288.7" width="28.90" height="7.80" rx="1.5" stroke="#b2d890" stroke-width="0.8" fill="none"/><path d="M412.6 290.2H417.1" stroke="#d6eabf" stroke-width="1.6"/><rect x="411.95" y="289.55" width="1.3" height="1.3" fill="#d04a2a"/><path d="M412.6 292.59999999999997H417.1" stroke="#d6eabf" stroke-width="1.6"/><rect x="411.95" y="291.95" width="1.3" height="1.3" fill="#d04a2a"/><path d="M412.6 295.0H417.1" stroke="#d6eabf" stroke-width="1.6"/><rect x="411.95" y="294.35" width="1.3" height="1.3" fill="#d04a2a"/><path d="M446 290.7H450" stroke="#d6eabf" stroke-width="1.6"/><rect x="449.60" y="290.00" width="1.4" height="1.4" fill="#d04a2a"/><path d="M36.3 235.4 L45.3 239.5 L36.3 243.9Z" stroke="#2f7f35" stroke-width="1.0" fill="none"/><path d="M36.3 258.4 L45.3 262.5 L36.3 266.9Z" stroke="#2f7f35" stroke-width="1.0" fill="none"/><path d="M69.7 264.6 L79.7 268.8 L69.7 273Z" stroke="#2f7f35" stroke-width="1.0" fill="none"/><circle cx="81.2" cy="268.8" r="1.3" stroke="#2f7f35" stroke-width="0.8" fill="none"/><rect x="31.05" y="238.75" width="1.5" height="1.5" fill="#d04a2a"/><rect x="51.75" y="238.75" width="1.5" height="1.5" fill="#d04a2a"/><rect x="31.05" y="261.75" width="1.5" height="1.5" fill="#d04a2a"/><rect x="51.75" y="261.75" width="1.5" height="1.5" fill="#d04a2a"/><rect x="64.45" y="268.05" width="1.5" height="1.5" fill="#d04a2a"/><rect x="85.25" y="268.05" width="1.5" height="1.5" fill="#d04a2a"/><rect x="94.25" y="255.45" width="1.5" height="1.5" fill="#d04a2a"/><rect x="134.95" y="238.95" width="1.5" height="1.5" fill="#d04a2a"/><rect x="134.95" y="261.75" width="1.5" height="1.5" fill="#d04a2a"/><path d="M82.5 268.8H86" stroke="#2f7f35" stroke-width="0.8"/><path d="M97 246.5l1.7 2.6h-3.4z" fill="#2f7f35"/><path d="M335.2 284.6 L343.8 289.3 L335.2 294Z" stroke="#2f7f35" stroke-width="1.0" fill="none"/><circle cx="345.5" cy="289.3" r="1.2" stroke="#2f7f35" stroke-width="0.8" fill="none"/><rect x="330.05" y="288.85" width="1.5" height="1.5" fill="#d04a2a"/><rect x="349.85" y="288.85" width="1.5" height="1.5" fill="#d04a2a"/><path d="M329.2 230.5V245.2H333.5" stroke="#e040e0" stroke-width="2.6" fill="none"/><path d="M335.5 241l6 3.5-6 3.5z" fill="#e040e0"/><path d="M335.5 229.5V247" stroke="#5cc84a" stroke-width="2.4"/><path d="M339.5 239.6L353.4 245.3L339.5 251.1Z" stroke="#5cc84a" stroke-width="1.8" fill="#2a6a2a"/><path d="M342 242.5l4 2.8-4 2.8z" fill="#e040e0"/><path d="M339 245.3H356.2" stroke="#5cc84a" stroke-width="1.4"/><circle cx="356" cy="245.3" r="1.6" fill="#5cc84a"/><rect x="355.40" y="244.70" width="1.2" height="1.2" fill="#d04a2a"/><path d="M345 290.5h9.5v5.5h-6v3.5h-4.5z" fill="#e040e0"/><path d="M349.5 291.5v3" stroke="#8a2a8a" stroke-width="0.8"/><circle cx="346.8" cy="301.5" r="2" fill="#58c048"/><circle cx="346.8" cy="305" r="2" fill="#58c048"/><circle cx="346.8" cy="308.5" r="2" fill="#58c048"/><rect x="346.90" y="251.90" width="1.2" height="1.2" fill="#d04a2a"/><text x="365.8" y="149.3" font-family="Liberation Sans" font-weight="bold" font-size="12.2" letter-spacing="-0.85" fill="#58cf48" stroke="#98e888" stroke-width="1.5" stroke-linejoin="round" paint-order="stroke">Needs Review</text><circle cx="435.4" cy="153" r="10.5" fill="#c9b735" fill-opacity="0.88"/><path d="M434.6 152.3v6.6l1.6-1.5 1.1 2.5 1-0.5-1.1-2.4h2.2z" fill="#303030" stroke="#e0e0e0" stroke-width="0.45"/><text x="22.8" y="313.9" font-family="Liberation Sans" font-size="8.9" fill="#c4c4c4" letter-spacing="0.2" word-spacing="1.2">Status = Complete</text></g></svg>
<svg class="a" style="left:0;top:0" width="452" height="58" viewBox="0 0 452 58"><rect x="2.7" y="32.4" width="2.6" height="7.600000000000001" fill="#c4c4c4"/><rect x="3.3000000000000003" y="32.4" width="1.2" height="7.600000000000001" fill="#b0b0b0"/><defs><linearGradient id="dg" x1="0" y1="0" x2="0" y2="1"><stop offset="0" stop-color="#f6d27a"/><stop offset="1" stop-color="#e08a3a"/></linearGradient></defs><path d="M8.2 32.3h4.2l1.8 1.8v5.6h-6z" fill="url(#dg)" stroke="#c98232" stroke-width="0.5"/><path d="M10 34.5l1.5 1.5-1 1.8" stroke="#fff3c8" stroke-width="0.7" fill="none"/><path d="M20.8 32.6h3.6l1 1h3.6v5.6H20.8z" fill="#e3a24a" stroke="#c27b2e" stroke-width="0.4"/><path d="M22 34.2h6v2h-6z" fill="#fbe9b8"/><path d="M20.8 39.3l1.7-3.4h7.6l-1.5 3.4z" fill="#f4f4f4" stroke="#9a9a9a" stroke-width="0.45"/><rect x="36" y="32.8" width="7.6" height="7" rx="0.8" fill="#b9c6d8" stroke="#93a3bd" stroke-width="0.5"/><rect x="37.3" y="33.8" width="5" height="3" fill="#e6ebf3"/><path d="M38.3 37l1.5 1.6 3.6-4" stroke="#58b05a" stroke-width="1.1" fill="none"/><rect x="50.3" y="32.6" width="7.2" height="7.2" rx="0.6" fill="#a6b6d2" stroke="#8497b8" stroke-width="0.5"/><rect x="51.8" y="33.2" width="4.2" height="2.8" fill="#eef2f8"/><rect x="52.2" y="37.2" width="3.4" height="2.4" fill="#c8d2e4"/><rect x="63" y="31.5" width="2" height="9.5" fill="#c8c8c8"/><path d="M71.2 32.3v7.6M67.4 36.1h7.6M68.8 33.7l4.8 4.8M73.6 33.7l-4.8 4.8" stroke="#b6c8de" stroke-width="1"/><path d="M71.2 31.8l-1.5 1.7h3zM71.2 40.4l-1.5-1.7h3zM66.9 36.1l1.7-1.5v3zM75.5 36.1l-1.7-1.5v3z" fill="#a6bfdc"/><ellipse cx="85.3" cy="36" rx="3.3" ry="3.9" fill="#dcdcdc" stroke="#cacaca" stroke-width="0.7"/><ellipse cx="84.6" cy="35" rx="1.6" ry="1.8" fill="#ececec"/><rect x="95.2" y="33.4" width="8.6" height="6.4" fill="#bccbe0" stroke="#a4b6d0" stroke-width="0.5"/><path d="M96.5 35.5h2.5M100 35.5h2.5M96.5 37.5h6" stroke="#f0f4f8" stroke-width="0.7"/><path d="M111 33.6l5.4 5.6M116.4 33.6l-5.4 5.6" stroke="#d9ae8e" stroke-width="1.2"/><circle cx="128" cy="36" r="4" fill="#dfe8f4" stroke="#6f8fc0" stroke-width="1"/><path d="M128 33.6v2.6l1.4 1.4" stroke="#3c5a8c" stroke-width="0.7" fill="none"/><path d="M138.2 32.8h5.6M141 32.8v6.8" stroke="#555" stroke-width="1.3"/><path d="M142.5 40l4.2-5" stroke="#c8a070" stroke-width="1"/><path d="M154 34.5q3 -1 3.5 1.8t-2.5 3.4" stroke="#e6b88a" stroke-width="1.1" fill="none"/><path d="M173 34q-3.5 0.2 -4.5 3.2t1.5 2.8" stroke="#e6b88a" stroke-width="1.1" fill="none"/><path d="M179.6 39.6l2.6-6.4 2.6 6.4M180.6 37.5h3.2" stroke="#b4c0d2" stroke-width="0.9" fill="none"/><rect x="184.6" y="35.5" width="4" height="4" fill="#c8d2e2"/><rect x="192.7" y="35.4" width="2.2" height="1.2" fill="#9a9a9a"/><path d="M199.5 34h5M202 34v6" stroke="#707070" stroke-width="1.3"/><path d="M204.8 33l1-1.2 1 1.2" stroke="#707070" stroke-width="0.5" fill="none"/><rect x="211.3" y="35.4" width="2.2" height="1.2" fill="#9a9a9a"/><path d="M217.5 33.3h5M217.5 35.6h7M217.5 37.9h3.5M217.5 40h6" stroke="#8aa6cc" stroke-width="0.9"/><rect x="230" y="35.4" width="2.2" height="1.2" fill="#9a9a9a"/><path d="M236 33.3h7.5M237.3 35.6h5M236 37.9h7.5M237.3 40h5" stroke="#8aa6cc" stroke-width="0.9"/><path d="M239.8 32.5v8" stroke="#b8c8dc" stroke-width="0.8"/><rect x="248.7" y="35.4" width="2.2" height="1.2" fill="#9a9a9a"/><rect x="253.3" y="32" width="2.6" height="8.5" fill="#c4c4c4"/><rect x="253.9" y="32" width="1.2" height="8.5" fill="#b0b0b0"/><path d="M263 37.2l2.8 2.8" stroke="#a0402a" stroke-width="1.5"/><circle cx="261" cy="35.2" r="3.1" fill="#eaf0f8" stroke="#4a5f80" stroke-width="0.9"/><circle cx="260.2" cy="34.400000000000006" r="1.2" fill="#ffffff"/><path d="M259.3 35.2h3.4M261 33.5v3.4" stroke="#5c7cae" stroke-width="0.8"/><path d="M278 37.2l2.8 2.8" stroke="#a0402a" stroke-width="1.5"/><circle cx="276" cy="35.2" r="3.1" fill="#eaf0f8" stroke="#4a5f80" stroke-width="0.9"/><circle cx="275.2" cy="34.400000000000006" r="1.2" fill="#ffffff"/><path d="M274.3 35.2h3.4" stroke="#5c7cae" stroke-width="0.8"/><path d="M292 37.2l2.8 2.8" stroke="#a0402a" stroke-width="1.5"/><circle cx="290" cy="35.2" r="3.1" fill="#eaf0f8" stroke="#4a5f80" stroke-width="0.9"/><circle cx="289.2" cy="34.400000000000006" r="1.2" fill="#ffffff"/><rect x="288.6" y="33.8" width="2.8" height="2.8" fill="none" stroke="#5c7cae" stroke-width="0.6"/><rect x="300" y="31.4" width="8" height="8.4" fill="#7d98c2" stroke="#5a76a6" stroke-width="0.5"/><circle cx="303.8" cy="35.4" r="2.4" fill="#e8eef8" stroke="#404e70" stroke-width="0.7"/><path d="M305.4 37l2.2 2.3" stroke="#a0402a" stroke-width="1.2"/><rect x="314" y="32" width="2.6" height="8.5" fill="#c4c4c4"/><rect x="314.6" y="32" width="1.2" height="8.5" fill="#b0b0b0"/><path d="M318 33h5M318 36h3v2.5h3" stroke="#c4b8a8" stroke-width="1.2" fill="none"/><rect x="320.5" y="32.4" width="3" height="6" fill="none" stroke="#b8b8b8" stroke-width="0.8"/><circle cx="325.5" cy="39" r="1.8" fill="#9ccf88"/><path d="M334 33.5h2v5h2" stroke="#c8c0a8" stroke-width="1" fill="none"/><path d="M349 33.5h2v5h2" stroke="#c8c0a8" stroke-width="1" fill="none"/><path d="M360.5 38.5h9.5M362 38.5v-3h6.5v3M363.5 34.5h3.5" stroke="#cfcfcf" stroke-width="1" fill="none"/><path d="M373.5 36.2h5M378 34.2h4.5v4h-4.5z" stroke="#c8c8c8" stroke-width="1.1" fill="#d8d8d8"/><rect x="390.5" y="32.6" width="5.5" height="7" rx="0.8" fill="#d6d6d6" stroke="#bcbcbc" stroke-width="0.5"/><path d="M391.8 35h3M391.8 36.8h3" stroke="#a8a8a8" stroke-width="0.6"/><rect x="2.7" y="46.2" width="2.6" height="7.799999999999997" fill="#c4c4c4"/><rect x="3.3000000000000003" y="46.2" width="1.2" height="7.799999999999997" fill="#b0b0b0"/><circle cx="11.2" cy="50" r="3.7" fill="#d6deea" stroke="#a8b8d2" stroke-width="0.9"/><ellipse cx="11.2" cy="49.2" rx="2.2" ry="1.8" fill="#f2f5fa"/><circle cx="30.1" cy="50" r="3.7" fill="#d6deea" stroke="#a8b8d2" stroke-width="0.9"/><ellipse cx="30.1" cy="49.2" rx="2.2" ry="1.8" fill="#f2f5fa"/><circle cx="48.8" cy="50" r="3.7" fill="#d6deea" stroke="#a8b8d2" stroke-width="0.9"/><ellipse cx="48.8" cy="49.2" rx="2.2" ry="1.8" fill="#f2f5fa"/><circle cx="63.2" cy="50" r="3.7" fill="#d6deea" stroke="#a8b8d2" stroke-width="0.9"/><ellipse cx="63.2" cy="49.2" rx="2.2" ry="1.8" fill="#f2f5fa"/><rect x="19.6" y="49.4" width="2.2" height="1.2" fill="#9a9a9a"/><rect x="38.4" y="49.4" width="2.2" height="1.2" fill="#9a9a9a"/><rect x="72.4" y="46.2" width="2.6" height="7.799999999999997" fill="#c4c4c4"/><rect x="73.0" y="46.2" width="1.2" height="7.799999999999997" fill="#b0b0b0"/><rect x="75.9" y="45.9" width="64.3" height="9" rx="1" fill="#ffffff" stroke="#c2c2c2" stroke-width="0.6"/><rect x="133" y="45.9" width="7.3" height="9" rx="0.8" fill="#c0281c"/><path d="M135.3 49.6h2.8l-1.4 1.7z" fill="#ffffff"/><text x="77.2" y="52.8" font-family="Liberation Sans" font-size="5.6" fill="#222">Basic</text><rect x="143.3" y="46.4" width="7" height="5.8" fill="#f0f0f0" stroke="#8a8a8a" stroke-width="0.6"/><rect x="143.3" y="46.4" width="7" height="1.4" fill="#8a8a8a"/><rect x="147" y="50" width="5" height="4.8" fill="#4f7fc0" stroke="#3a64a0" stroke-width="0.4"/><rect x="156.5" y="46" width="8" height="6.8" fill="#f4f4f4" stroke="#8a8a8a" stroke-width="0.6"/><rect x="156.5" y="46" width="8" height="1.4" fill="#8a8a8a"/><path d="M158 50l1.6 1.6 3-3" stroke="#4a80c8" stroke-width="0.9" fill="none"/><circle cx="165" cy="53.6" r="1.9" fill="#d84c3a"/><rect x="170.6" y="46.2" width="2.6" height="7.799999999999997" fill="#c4c4c4"/><rect x="171.2" y="46.2" width="1.2" height="7.799999999999997" fill="#b0b0b0"/><rect x="173.5" y="44.3" width="13" height="11.8" rx="1.2" fill="#dddddd" stroke="#b8b8b8" stroke-width="0.6"/><path d="M176.5 47.5h6v4h-6z" fill="#e4e4e4" stroke="#9a9a9a" stroke-width="0.4"/><path d="M177 49.5l1.5 1.5 3.2-3" stroke="#d02a20" stroke-width="1" fill="none"/><path d="M181.5 50.2v5.5l1.4-1.2 1 2.1 0.9-0.4-1-2.1h1.9z" fill="#f4f4f4" stroke="#222" stroke-width="0.55"/><path d="M189.5 47h5M189.5 51h5" stroke="#555" stroke-width="0.9"/><circle cx="189.3" cy="47" r="1" fill="#d23a2a"/><circle cx="189.3" cy="51" r="1" fill="#d23a2a"/><circle cx="194.8" cy="47.5" r="0.9" fill="#d23a2a"/><path d="M194.5 50v5.5l1.4-1.2 1 2.1 0.9-0.4-1-2.1h1.9z" fill="#f4f4f4" stroke="#222" stroke-width="0.55"/><path d="M204 47.5h2.5v5" stroke="#666" stroke-width="0.9" fill="none"/><circle cx="204" cy="47.4" r="0.9" fill="#e0b040"/><path d="M208.2 49.5v5.5l1.4-1.2 1 2.1 0.9-0.4-1-2.1h1.9z" fill="#f4f4f4" stroke="#222" stroke-width="0.55"/><path d="M217.8 50h3.5" stroke="#555" stroke-width="0.9"/><circle cx="217.8" cy="50" r="0.9" fill="#e0b040"/><circle cx="223.2" cy="50.5" r="2.2" fill="#eaeaea" stroke="#333" stroke-width="0.8"/><path d="M222.5 50v5.5l1.4-1.2 1 2.1 0.9-0.4-1-2.1h1.9z" fill="#f4f4f4" stroke="#222" stroke-width="0.55"/><path d="M232.3 47.3h4.8M234.7 47.3v6" stroke="#111" stroke-width="1.5"/><path d="M236.2 50.2v5.5l1.4-1.2 1 2.1 0.9-0.4-1-2.1h1.9z" fill="#f4f4f4" stroke="#222" stroke-width="0.55"/><rect x="242.6" y="46.5" width="1.2" height="8.5" fill="#c6c6c6"/><rect x="247.5" y="46.8" width="5.6" height="4.8" fill="#e8e8e8" stroke="#777" stroke-width="0.5"/><path d="M248.3 48.5h4M248.3 50h4" stroke="#999" stroke-width="0.5"/><path d="M251.8 50.3v5.5l1.4-1.2 1 2.1 0.9-0.4-1-2.1h1.9z" fill="#f4f4f4" stroke="#222" stroke-width="0.55"/><rect x="260.6" y="46.2" width="2.6" height="7.799999999999997" fill="#c4c4c4"/><rect x="261.20000000000005" y="46.2" width="1.2" height="7.799999999999997" fill="#b0b0b0"/><rect x="264" y="46" width="59.2" height="8.7" rx="1" fill="#ffffff" stroke="#c8c8c8" stroke-width="0.6"/><circle cx="268" cy="49.8" r="1.7" fill="none" stroke="#222" stroke-width="0.8"/><path d="M269.2 51l1.6 1.6M271 49.5l1 0.8 0.4-0.8" stroke="#222" stroke-width="0.8" fill="none"/><text x="274" y="52.6" font-family="Liberation Sans" font-size="5.8" fill="#d0d0d0">Search</text><rect x="323" y="46" width="7.5" height="8.7" rx="0.8" fill="#c0281c"/><path d="M325.4 49.6h2.8l-1.4 1.7z" fill="#ffffff"/><path d="M334.4 49.6h3.6l-1.8 2z" fill="#b8241a"/><rect x="342" y="46.2" width="2.6" height="7.799999999999997" fill="#c4c4c4"/><rect x="342.6" y="46.2" width="1.2" height="7.799999999999997" fill="#b0b0b0"/></svg>
<div id="lborder" class="a"></div>
<div id="gap1" class="a"></div>
<div id="gap2" class="a"></div>
<div id="dlg" class="a">
  <div id="dtitle" class="a">
    <div class="a" style="left:4.5px;top:3.8px;width:6.4px;height:5.4px;background:#e8e8e8;border-top:1.3px solid #6a8ab8"></div>
    <div class="a" style="left:129px;top:2.2px;font-size:7.3px;font-weight:bold;color:#f2f2f2">Differences</div>
    <div class="a" style="left:287.6px;top:0.6px;font-size:9px;font-weight:bold;color:#f0f0f0">×</div>
  </div>
  <!-- Changes group -->
  <div class="a grp" style="left:4.2px;top:16.2px;width:289.6px;height:212.3px"></div>
  <div class="a glabel" style="left:8.2px;top:13.3px">Changes</div>
  <div class="a" style="left:9px;top:26.1px;width:245.6px;height:190.2px;background:#fff;border:1px solid #5a5a5a;box-shadow:inset -0.6px -0.6px 0 #8a8a8a">
    <div class="a" style="left:0;top:0;width:243.6px;height:7.6px;background:linear-gradient(#d4d4d4,#bdbdbd);border-bottom:0.5px solid #a0a0a0"></div>
    <div class="a" style="left:136.6px;top:0;width:0.7px;height:7.6px;background:#9a9a9a"></div>
    <div class="a" style="left:177.6px;top:0;width:0.7px;height:7.6px;background:#9a9a9a"></div>
    <div class="a" style="left:218.6px;top:0;width:0.7px;height:7.6px;background:#9a9a9a"></div>
    <div class="a" style="left:240.2px;top:0;width:0.7px;height:7.6px;background:#9a9a9a"></div>
    <span class="a ft" style="left:0.6px;top:1px">Name</span>
    <span class="a ft" style="left:137px;top:1px">Type</span>
    <span class="a ft" style="left:178.2px;top:1px">Action</span>
    <span class="a ft" style="left:219px;top:1px">Cnt</span>
    <div class="a" style="left:0;top:7.6px;width:243.6px;height:7.2px;background:#8a8a8a"></div>
    <div class="a" style="left:2.4px;top:10.0px;width:3.5px;height:3.5px;border:0.5px solid #6e6e6e;background:#9c9c9c"></div><div class="a" style="left:3.2px;top:11.4px;width:2px;height:0.6px;background:#6a6a6a"></div><div class="a" style="left:6px;top:11.4px;width:3.2px;height:0.6px;background:#6a6a6a"></div><span class="a ft" style="left:10.2px;top:8.6px;color:#f2f2f2">afe/AFE_TOP</span><span class="a ft" style="left:137px;top:8.6px;color:#f2f2f2">Cell</span><span class="a ft" style="left:219px;top:8.6px;color:#f2f2f2">53</span>
<div class="a" style="left:2.4px;top:17.2px;width:3.5px;height:3.5px;border:0.5px solid #9a9a9a;background:#f8f8f8"></div><div class="a" style="left:3.2px;top:18.6px;width:2px;height:0.5px;background:#555"></div><div class="a" style="left:6px;top:18.6px;width:3.2px;height:0.5px;background:#aaa"></div><span class="a ft" style="left:10.2px;top:15.8px;color:#2a2a2a">afe/add8_mirror</span><span class="a ft" style="left:137px;top:15.8px;color:#2a2a2a">Cell</span><span class="a ft" style="left:219px;top:15.8px;color:#2a2a2a">16</span>
<div class="a" style="left:2.4px;top:24.4px;width:3.5px;height:3.5px;border:0.5px solid #9a9a9a;background:#f8f8f8"></div><div class="a" style="left:3.2px;top:25.8px;width:2px;height:0.5px;background:#555"></div><div class="a" style="left:6px;top:25.8px;width:3.2px;height:0.5px;background:#aaa"></div><span class="a ft" style="left:10.2px;top:23px;color:#2a2a2a">afe/fadd_mirror</span><span class="a ft" style="left:137px;top:23px;color:#2a2a2a">Cell</span><span class="a ft" style="left:219px;top:23px;color:#2a2a2a">8</span>

  </div>
  <div class="a btn" style="left:259.3px;top:28px;width:26px;height:10.6px">Next</div>
  <div class="a btn" style="left:259.3px;top:41.5px;width:26px;height:10.6px">Skip</div>
  <div class="a btn" style="left:259.3px;top:55px;width:26px;height:10.6px">Prev</div>
  <div class="a btn" style="left:259.3px;top:68.5px;width:26px;height:10.6px">- All</div>
  <div class="a btn" style="left:259.3px;top:82px;width:26px;height:10.6px">+ All</div>
  <div class="a btn" style="left:259.3px;top:102.4px;width:26.2px;height:11px">Zoom -</div>
  <div class="a btn" style="left:259.3px;top:115.8px;width:26.2px;height:11px">Zoom +</div>
  <div class="a btn" style="left:259.3px;top:129.9px;width:26.2px;height:11px">ZoomTo</div>
  <div class="a" style="left:259.5px;top:147px;width:21.8px;height:7.8px;background:#fff;border:0.7px solid #b0b0b0">
    <span class="a" style="left:2.2px;top:0.6px;font-size:5.9px;font-weight:bold;color:#2a2a2a">98</span>
    <div class="a" style="left:15px;top:0;width:6.2px;height:6.6px;background:#b8261c;border-radius:1px"></div>
    <div class="a" style="left:16.6px;top:1.2px;width:0;height:0;border-left:1.5px solid transparent;border-right:1.5px solid transparent;border-bottom:1.6px solid #fff"></div>
    <div class="a" style="left:16.6px;top:3.8px;width:0;height:0;border-left:1.5px solid transparent;border-right:1.5px solid transparent;border-top:1.6px solid #fff"></div>
  </div>
  <div class="a btn" style="left:259.3px;top:159.5px;width:26.6px;height:11px">Summary</div>
  <!-- Filters -->
  <div class="a grp" style="left:4px;top:241.5px;width:288.5px;height:21px"></div>
  <div class="a glabel" style="left:8.2px;top:238.3px">Filters</div>
  <div class="a cb" style="left:10.3px;top:249.6px"></div>
  <svg class="a" style="left:10px;top:248.0px" width="8" height="8" viewBox="0 0 8 8"><path d="M1.6 4.2l1.6 2.2 3.4-5" stroke="#c8281a" stroke-width="1.3" fill="none"/></svg>
  <span class="a ft" style="left:17.5px;top:249.2px">All</span>
  <div class="a cb" style="left:28.1px;top:249.6px"></div>
  <span class="a ft" style="left:35.8px;top:249.2px">Instances</span>
  <div class="a cb" style="left:63.2px;top:249.6px"></div>
  <span class="a ft" style="left:70.6px;top:249.2px">Nets</span>
  <div class="a cb" style="left:86.2px;top:249.6px"></div>
  <span class="a ft" style="left:93.8px;top:249.2px">Labels</span>
  <div class="a cb" style="left:114.3px;top:249.6px"></div>
  <span class="a ft" style="left:121.8px;top:249.2px">Properties/CDF</span>
  <!-- Details -->
  <div class="a grp" style="left:4px;top:275px;width:285.5px;height:117px"></div>
  <div class="a glabel" style="left:8.2px;top:271.8px">Details</div>
  <div id="details" class="a">
<div id="dtext" class="a">Cdf Property acPhase added with value ""
Instance I47 was removed.
Instance I146:
User Property vendorName added with value "TSMC"
Instance I151:
User Property vendorName added with value "TSMC"
Instance I64:
User Property layoutTip added with value "Near pads"
Instance I65:
User Property layoutTip added with value "Near pads"
Instance I74:
Moved in the X by 0.25.
Label "Needs Review" was added at location (18.9375 5.9375)</div>
    <!-- vscroll -->
    <div class="a" style="left:263.5px;top:0;width:8.2px;height:99px;background:#e9e9e9;border-left:0.5px solid #d0d0d0"></div>
    <div class="a" style="left:264.5px;top:7px;width:6.4px;height:76px;background:linear-gradient(90deg,#a8a8a8,#c4c4c4,#a8a8a8);border-radius:1.5px"></div>
    <div class="a" style="left:264.5px;top:84.5px;width:6.4px;height:6.4px;background:linear-gradient(#f2f2f2,#d4d4d4);border:0.5px solid #aaa"></div>
    <!-- hscroll -->
    <div class="a" style="left:0;top:92px;width:263.5px;height:7.6px;background:#e6e6e6"></div>
    <div class="a" style="left:0.5px;top:92.6px;width:7px;height:6.4px;background:linear-gradient(#f2f2f2,#d4d4d4);border:0.5px solid #aaa"></div>
    <div class="a" style="left:8px;top:92.8px;width:248px;height:6px;background:linear-gradient(#b8b8b8,#a2a2a2);border-radius:2px"></div>
    <div class="a" style="left:256.5px;top:92.6px;width:7px;height:6.4px;background:linear-gradient(#f2f2f2,#d4d4d4);border:0.5px solid #aaa"></div>
  </div>
  <div class="a btn" style="left:151.2px;top:396.9px;width:26.6px;height:8.6px;line-height:7.6px;background:linear-gradient(#e0503c,#b8261a);border-color:#8e1e14;color:#fff">Close</div>
  <div class="a btn" style="left:179.5px;top:396.9px;width:22.3px;height:8.6px;line-height:7.6px">Save</div>
  <div class="a btn" style="left:202.9px;top:396.9px;width:25.8px;height:8.6px;line-height:7.6px">Export</div>
  <div class="a btn" style="left:229.8px;top:396.9px;width:36.5px;height:8.6px;line-height:7.6px">Save state</div>
  <div class="a btn" style="left:268.4px;top:396.9px;width:29px;height:8.6px;line-height:7.6px">Help</div>
</div>
<div id="bottomstrip" class="a"></div>
</body></html>
